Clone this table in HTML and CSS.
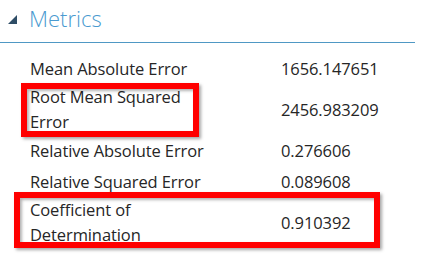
FILE: index.html
```html
<!DOCTYPE html>
<html>
<head>
<meta charset="utf-8">
<link rel="stylesheet" href="styles.css">
</head>
<body>
<div class="panel">
  <div class="header">
    <svg class="toggle" width="9" height="9" viewBox="0 0 9 9"><polygon points="9,0 9,9 0,9" fill="#2e4d66"/></svg>
    <span class="title">Metrics</span>
  </div>
  <div class="metrics">
    <div class="row"><div class="label">Mean Absolute Error</div><div class="value">1656.147651</div></div>
    <div class="row tall"><div class="label">Root Mean Squared<br>Error</div><div class="value">2456.983209</div></div>
    <div class="row"><div class="label">Relative Absolute Error</div><div class="value">0.276606</div></div>
    <div class="row"><div class="label">Relative Squared Error</div><div class="value">0.089608</div></div>
    <div class="row tall"><div class="label">Coefficient of<br>Determination</div><div class="value">0.910392</div></div>
    <div class="mark mark-rmse"></div>
    <div class="mark mark-cod"></div>
  </div>
</div>
</body>
</html>
```
FILE: styles.css
```css
html, body {
  margin: 0;
  padding: 0;
  background: #ffffff;
}
.panel {
  width: 439px;
  height: 258px;
  overflow: hidden;
  font-family: "Open Sans", "Noto Sans", sans-serif;
}
.header {
  display: flex;
  align-items: center;
  height: 43px;
  border-bottom: 1px solid #4f98c4;
  width: 415px;
  box-sizing: border-box;
  padding-left: 8px;
}
.toggle {
  margin-right: 12px;
  margin-top: -4px;
}
.title {
  font-size: 22px;
  font-weight: 300;
  color: #4a9ad0;
  margin-top: -6px;
}
.metrics {
  position: relative;
  margin-top: 10px;
  padding-left: 30px;
}
.row {
  display: grid;
  grid-template-columns: 251px auto;
  align-items: center;
  height: 31px;
  font-size: 16.5px;
  font-weight: 500;
  line-height: 25px;
  color: #262626;
  letter-spacing: -0.1px;
}
.row.tall {
  height: 51px;
}
.label {
  padding-bottom: 1px;
}
.mark {
  position: absolute;
  border: 6px solid #ff0000;
  box-shadow: 2px 2px 3px rgba(0, 0, 0, 0.35), inset 2px 2px 3px rgba(0, 0, 0, 0.3);
}
.mark-rmse {
  left: 21px;
  top: 30px;
  width: 166px;
  height: 42px;
}
.mark-cod {
  left: 14px;
  top: 139px;
  width: 354px;
  height: 44px;
}
```
